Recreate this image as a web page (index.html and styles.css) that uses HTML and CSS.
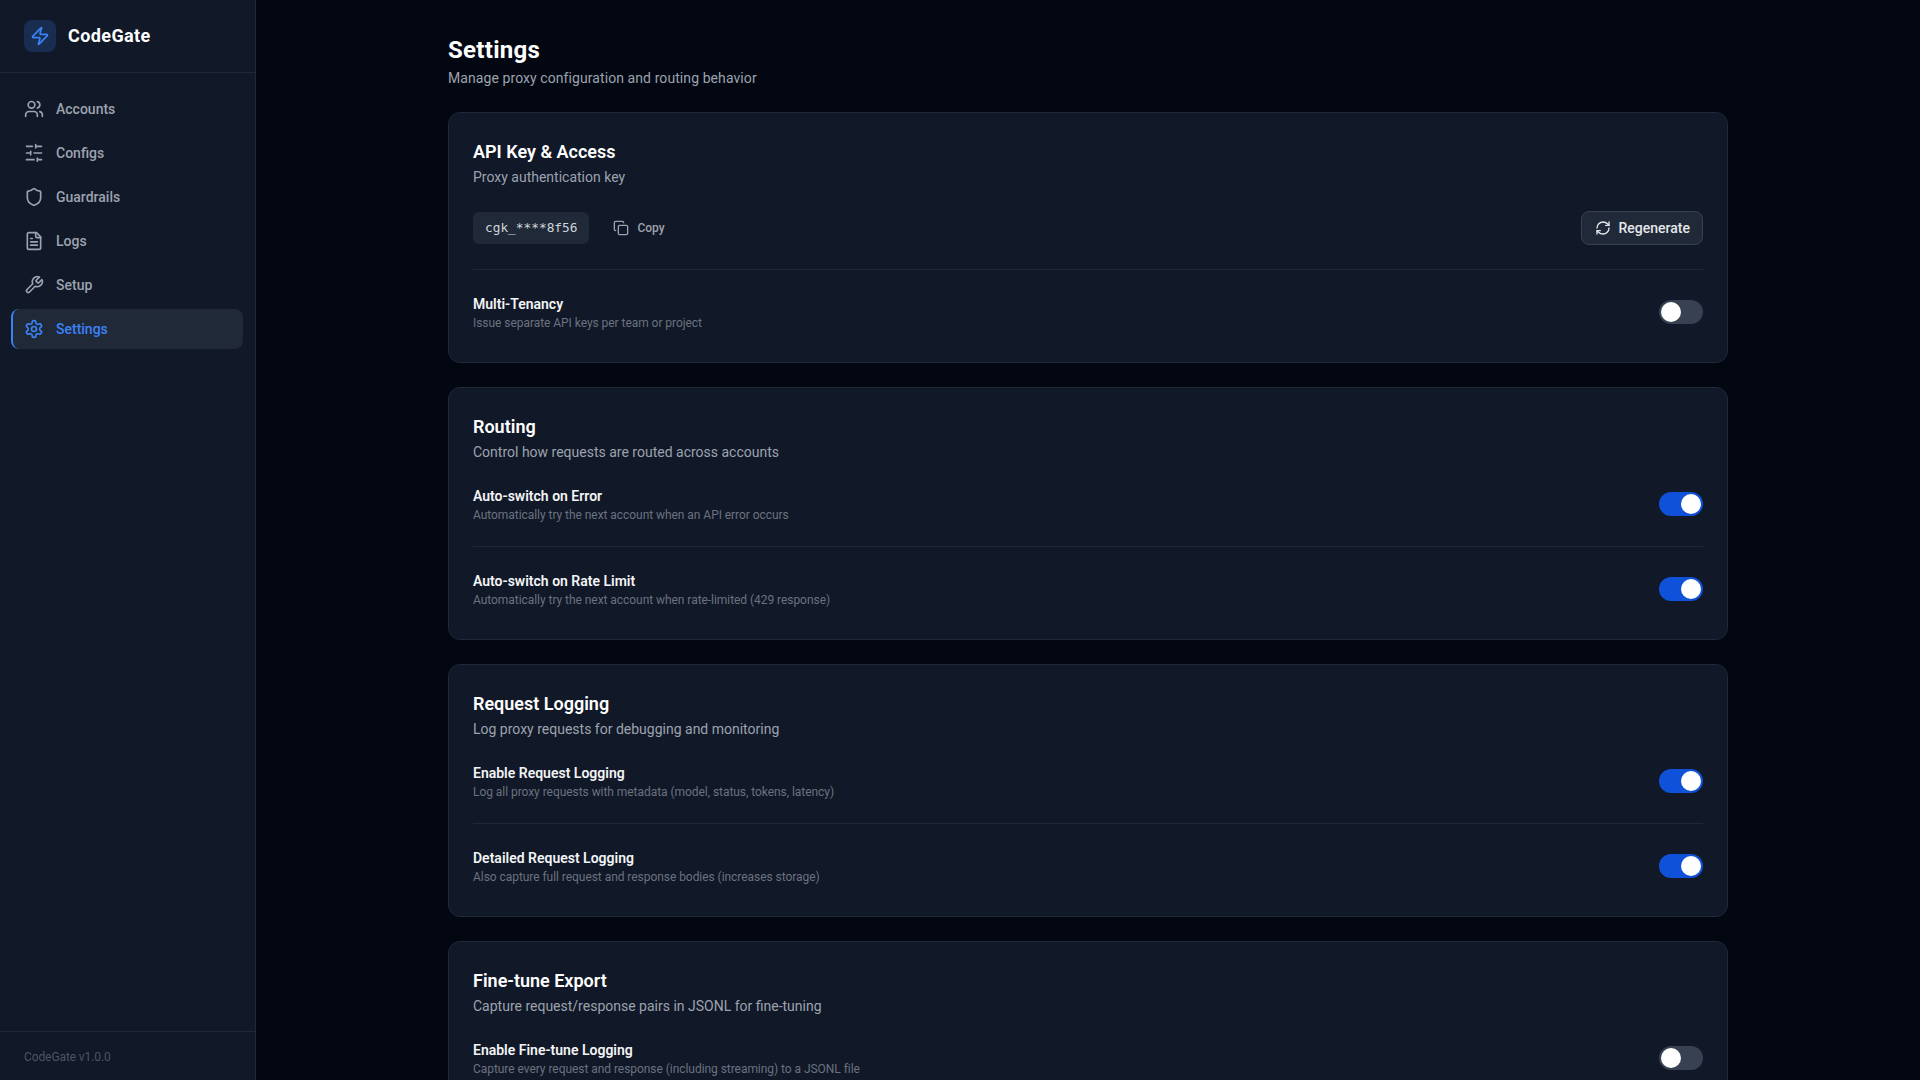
FILE: index.html
```html
<!DOCTYPE html>
<html lang="en">
<head>
<meta charset="utf-8">
<title>CodeGate Settings</title>
<link rel="stylesheet" href="styles.css">
</head>
<body>
<div class="app">
  <aside class="sidebar">
    <div class="brand">
      <span class="logo"><svg class="icon" viewBox="0 0 24 24"><path d="M4 14a1 1 0 0 1-.78-1.63l9.9-10.2a.5.5 0 0 1 .86.46l-1.92 6.02A1 1 0 0 0 13 10h7a1 1 0 0 1 .78 1.63l-9.9 10.2a.5.5 0 0 1-.86-.46l1.92-6.02A1 1 0 0 0 11 14z"/></svg></span>
      <span class="brand-name">CodeGate</span>
    </div>
    <nav class="nav">
      <a class="nav-item"><svg class="icon" viewBox="0 0 24 24"><path d="M16 21v-2a4 4 0 0 0-4-4H6a4 4 0 0 0-4 4v2"/><circle cx="9" cy="7" r="4"/><path d="M22 21v-2a4 4 0 0 0-3-3.87"/><path d="M16 3.13a4 4 0 0 1 0 7.75"/></svg>Accounts</a>
      <a class="nav-item"><svg class="icon" viewBox="0 0 24 24"><path d="M21 4h-7M10 4H3M21 12h-9M8 12H3M21 20h-5M12 20H3M14 2v4M8 10v4M16 18v4"/></svg>Configs</a>
      <a class="nav-item"><svg class="icon" viewBox="0 0 24 24"><path d="M20 13c0 5-3.5 7.5-7.66 8.95a1 1 0 0 1-.67-.01C7.5 20.5 4 18 4 13V6a1 1 0 0 1 1-1c2 0 4.5-1.2 6.24-2.72a1.17 1.17 0 0 1 1.52 0C14.51 3.81 17 5 19 5a1 1 0 0 1 1 1z"/></svg>Guardrails</a>
      <a class="nav-item"><svg class="icon" viewBox="0 0 24 24"><path d="M15 2H6a2 2 0 0 0-2 2v16a2 2 0 0 0 2 2h12a2 2 0 0 0 2-2V7Z"/><path d="M14 2v4a2 2 0 0 0 2 2h4"/><path d="M10 9H8M16 13H8M16 17H8"/></svg>Logs</a>
      <a class="nav-item"><svg class="icon" viewBox="0 0 24 24"><path d="M14.7 6.3a1 1 0 0 0 0 1.4l1.6 1.6a1 1 0 0 0 1.4 0l3.77-3.77a6 6 0 0 1-7.94 7.94l-6.91 6.91a2.12 2.12 0 0 1-3-3l6.91-6.91a6 6 0 0 1 7.94-7.94l-3.76 3.76z"/></svg>Setup</a>
      <a class="nav-item active"><svg class="icon" viewBox="0 0 24 24"><path d="M12.22 2h-.44a2 2 0 0 0-2 2v.18a2 2 0 0 1-1 1.73l-.43.25a2 2 0 0 1-2 0l-.15-.08a2 2 0 0 0-2.73.73l-.22.38a2 2 0 0 0 .73 2.73l.15.1a2 2 0 0 1 1 1.72v.51a2 2 0 0 1-1 1.74l-.15.09a2 2 0 0 0-.73 2.73l.22.38a2 2 0 0 0 2.73.73l.15-.08a2 2 0 0 1 2 0l.43.25a2 2 0 0 1 1 1.73V20a2 2 0 0 0 2 2h.44a2 2 0 0 0 2-2v-.18a2 2 0 0 1 1-1.73l.43-.25a2 2 0 0 1 2 0l.15.08a2 2 0 0 0 2.73-.73l.22-.39a2 2 0 0 0-.73-2.73l-.15-.08a2 2 0 0 1-1-1.74v-.5a2 2 0 0 1 1-1.74l.15-.09a2 2 0 0 0 .73-2.73l-.22-.38a2 2 0 0 0-2.73-.73l-.15.08a2 2 0 0 1-2 0l-.43-.25a2 2 0 0 1-1-1.73V4a2 2 0 0 0-2-2z"/><circle cx="12" cy="12" r="3"/></svg>Settings</a>
    </nav>
    <div class="version">CodeGate v1.0.0</div>
  </aside>
  <main class="main">
    <div class="content">
      <h1 class="page-title">Settings</h1>
      <p class="page-sub">Manage proxy configuration and routing behavior</p>

      <section class="card">
        <h2 class="card-title">API Key &amp; Access</h2>
        <p class="card-sub">Proxy authentication key</p>
        <div class="key-row">
          <code class="key">cgk_****8f56</code>
          <span class="copy"><svg class="icon-sm" viewBox="0 0 24 24"><rect x="8" y="8" width="14" height="14" rx="2"/><path d="M4 16c-1.1 0-2-.9-2-2V4c0-1.1.9-2 2-2h10c1.1 0 2 .9 2 2"/></svg>Copy</span>
          <button class="regen"><svg class="icon-sm" viewBox="0 0 24 24"><path d="M3 12a9 9 0 0 1 9-9 9.75 9.75 0 0 1 6.74 2.74L21 8"/><path d="M21 3v5h-5"/><path d="M21 12a9 9 0 0 1-9 9 9.75 9.75 0 0 1-6.74-2.74L3 16"/><path d="M8 16H3v5"/></svg>Regenerate</button>
        </div>
        <div class="row ruled">
          <div><div class="row-label">Multi-Tenancy</div><div class="row-desc">Issue separate API keys per team or project</div></div>
          <span class="toggle"></span>
        </div>
      </section>

      <section class="card">
        <h2 class="card-title">Routing</h2>
        <p class="card-sub">Control how requests are routed across accounts</p>
        <div class="row first">
          <div><div class="row-label">Auto-switch on Error</div><div class="row-desc">Automatically try the next account when an API error occurs</div></div>
          <span class="toggle on"></span>
        </div>
        <div class="row ruled">
          <div><div class="row-label">Auto-switch on Rate Limit</div><div class="row-desc">Automatically try the next account when rate-limited (429 response)</div></div>
          <span class="toggle on"></span>
        </div>
      </section>

      <section class="card">
        <h2 class="card-title">Request Logging</h2>
        <p class="card-sub">Log proxy requests for debugging and monitoring</p>
        <div class="row first">
          <div><div class="row-label">Enable Request Logging</div><div class="row-desc">Log all proxy requests with metadata (model, status, tokens, latency)</div></div>
          <span class="toggle on"></span>
        </div>
        <div class="row ruled">
          <div><div class="row-label">Detailed Request Logging</div><div class="row-desc">Also capture full request and response bodies (increases storage)</div></div>
          <span class="toggle on"></span>
        </div>
      </section>

      <section class="card">
        <h2 class="card-title">Fine-tune Export</h2>
        <p class="card-sub">Capture request/response pairs in JSONL for fine-tuning</p>
        <div class="row first">
          <div><div class="row-label">Enable Fine-tune Logging</div><div class="row-desc">Capture every request and response (including streaming) to a JSONL file</div></div>
          <span class="toggle"></span>
        </div>
      </section>
    </div>
  </main>
</div>
</body>
</html>
```

FILE: styles.css
```css
* { box-sizing: border-box; }
html, body { margin: 0; height: 100%; overflow: hidden; }
body { background: #030712; color: #f9fafb; font-family: Roboto, "Noto Sans", sans-serif; font-size: 14px; line-height: 20px; }
.app { display: flex; height: 100vh; }
.sidebar { width: 256px; flex: none; display: flex; flex-direction: column; background: #111827; border-right: 1px solid #1f2937; }
.brand { height: 73px; flex: none; display: flex; align-items: center; gap: 12px; padding: 0 24px 1px; border-bottom: 1px solid #1f2937; }
.logo { width: 32px; height: 32px; border-radius: 8px; display: flex; align-items: center; justify-content: center; background: rgba(59,130,246,.2); color: #3b82f6; }
.brand-name { font-size: 18px; line-height: 28px; font-weight: 700; color: #fff; letter-spacing: .4px; }
.icon { width: 20px; height: 20px; flex: none; fill: none; stroke: currentColor; stroke-width: 2; stroke-linecap: round; stroke-linejoin: round; }
.icon-sm { width: 16px; height: 16px; flex: none; fill: none; stroke: currentColor; stroke-width: 2; stroke-linecap: round; stroke-linejoin: round; }
.nav { flex: 1; display: flex; flex-direction: column; gap: 4px; padding: 16px 12px 0 11px; }
.nav-item { height: 40px; display: flex; align-items: center; gap: 12px; padding-left: 11px; border-left: 2px solid transparent; border-radius: 8px; color: #9ca3af; font-weight: 500; }
.nav-item.active { background: #1f2937; color: #3b82f6; border-left-color: #3b82f6; }
.version { height: 49px; flex: none; padding: 17px 24px 0; border-top: 1px solid #1f2937; color: #4b5563; font-size: 12px; line-height: 16px; letter-spacing: -.1px; }
.main { flex: 1; min-width: 0; overflow: hidden; }
.content { width: 1280px; margin: 0 auto; padding: 32px 0; }
.page-title { margin: 0; padding-top: 4px; font-size: 24px; line-height: 28px; font-weight: 700; color: #fff; letter-spacing: .3px; }
.page-sub { margin: 4px 0 24px; color: #9ca3af; letter-spacing: .08px; }
.card { background: #111827; border: 1px solid #1f2937; border-radius: 12px; padding: 24px; margin-bottom: 24px; }
.card-title { margin: 0; padding-top: 2px; font-size: 18px; line-height: 26px; font-weight: 600; color: #fff; }
.card-sub { margin: 2px 0 0; color: #9ca3af; }
.key-row { display: flex; align-items: center; margin-top: 24px; height: 34px; }
.key { height: 32px; padding: 0 12px; display: flex; align-items: center; border-radius: 6px; background: #1f2937; color: #d1d5db; font-family: "DejaVu Sans Mono", monospace; font-size: 12.8px; }
.copy { display: flex; align-items: center; gap: 8px; margin-left: 24px; color: #9ca3af; font-size: 12px; font-weight: 500; }
.regen { margin-left: auto; height: 34px; padding: 0 12px 0 13px; display: flex; align-items: center; gap: 8px; border: 1px solid #374151; border-radius: 8px; background: #1f2937; color: #e5e7eb; font: 500 14px/20px Roboto, "Noto Sans", sans-serif; }
.row { display: flex; align-items: center; justify-content: space-between; padding: 8px 0; }
.row.first { margin-top: 16px; }
.row.ruled { margin-top: 16px; padding-top: 24px; border-top: 1px solid #1f2937; }
.key-row + .row.ruled { margin-top: 24px; }
.row-label { font-weight: 600; font-size: 14px; line-height: 20px; color: #f3f4f6; }
.row-desc { font-size: 12px; line-height: 18px; margin-bottom: -2px; color: #6b7280; letter-spacing: -.05px; }
.toggle { width: 44px; height: 24px; border-radius: 12px; background: #374151; position: relative; flex: none; }
.toggle::after { content: ""; position: absolute; top: 2px; left: 2px; width: 20px; height: 20px; border-radius: 50%; background: #fff; }
.toggle.on { background: #0f52d9; }
.toggle.on::after { left: 22px; }
```
